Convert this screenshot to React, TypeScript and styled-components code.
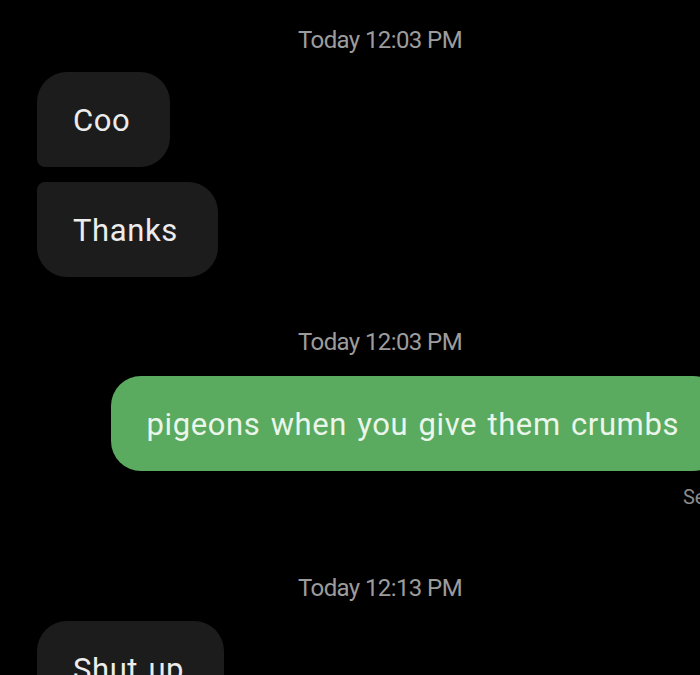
import React from "react";
import styled, { createGlobalStyle, css } from "styled-components";

const Global = createGlobalStyle`
  html, body { margin: 0; padding: 0; background: #000; overflow: hidden; }
  body { font-family: Roboto, "Noto Sans", sans-serif; }
`;

const Thread = styled.div`
  width: 760px;
  height: 675px;
  box-sizing: border-box;
  padding: 0 37px;
  display: flex;
  flex-direction: column;
  background: #000;
  overflow: hidden;
`;

const Stamp = styled.div<{ $top: number }>`
  flex-shrink: 0;
  margin-top: ${(p) => p.$top}px;
  height: 30px;
  line-height: 30px;
  text-align: center;
  color: #9c9c9c;
  font-size: 24px;
  letter-spacing: -0.6px;
`;

type Shape = "first" | "last" | "single";

const Bubble = styled.div<{ $out?: boolean; $shape: Shape; $top: number }>`
  flex-shrink: 0;
  margin-top: ${(p) => p.$top}px;
  align-self: ${(p) => (p.$out ? "flex-end" : "flex-start")};
  height: 95px;
  box-sizing: border-box;
  display: flex;
  align-items: center;
  padding: 2px ${(p) => (p.$out ? 44 : 40)}px 0 36px;
  font-size: 31px;
  letter-spacing: 0.6px;
  word-spacing: 2px;
  white-space: nowrap;
  color: ${(p) => (p.$out ? "#eaf6ea" : "#ececec")};
  background: ${(p) => (p.$out ? "#5aaa5f" : "#1c1c1c")};
  border-radius: 30px;
  ${(p) =>
    p.$shape === "first" &&
    css`
      border-bottom-left-radius: 8px;
    `}
  ${(p) =>
    p.$shape === "last" &&
    css`
      border-top-left-radius: 8px;
    `}
`;

const Status = styled.div`
  flex-shrink: 0;
  align-self: flex-end;
  margin-top: 14px;
  color: #8a8a8a;
  font-size: 20px;
  line-height: 24px;
`;

export default function App() {
  return (
    <>
      <Global />
      <Thread>
        <Stamp $top={25}>Today 12:03 PM</Stamp>
        <Bubble $shape="first" $top={17}>Coo</Bubble>
        <Bubble $shape="last" $top={15}>Thanks</Bubble>
        <Stamp $top={50}>Today 12:03 PM</Stamp>
        <Bubble $out $shape="single" $top={19}>
          pigeons when you give them crumbs
        </Bubble>
        <Status>Sent</Status>
        <Stamp $top={64}>Today 12:13 PM</Stamp>
        <Bubble $shape="single" $top={18}>Shut up</Bubble>
      </Thread>
    </>
  );
}
